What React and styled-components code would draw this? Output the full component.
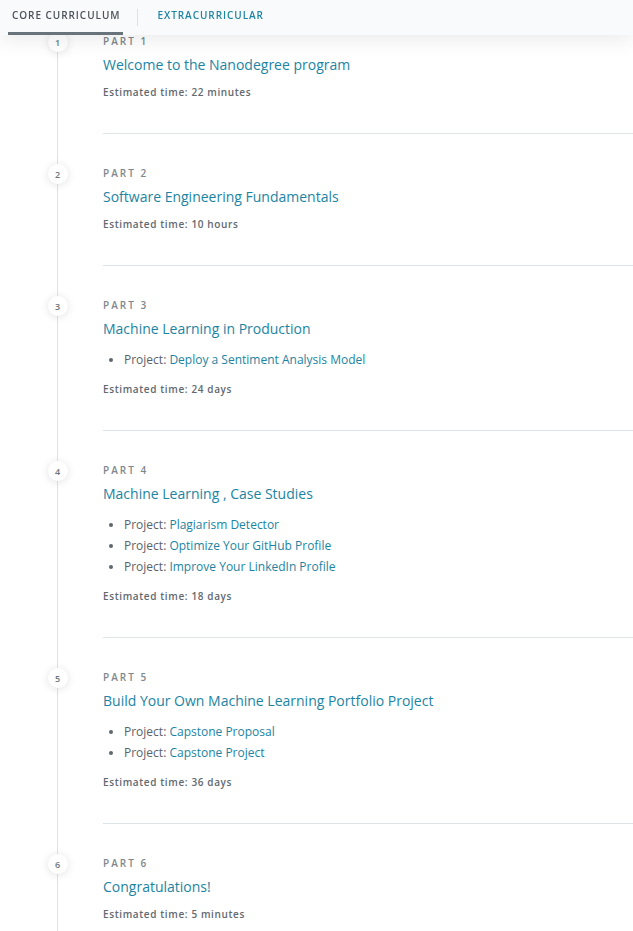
import styled, { createGlobalStyle } from 'styled-components';

const GlobalStyle = createGlobalStyle`
  html, body {
    margin: 0;
    padding: 0;
    background: #ffffff;
    font-family: "Open Sans", "Liberation Sans", sans-serif;
  }
`;

const TabBar = styled.nav`
  position: fixed;
  top: 0;
  left: 0;
  right: 0;
  height: 35px;
  display: flex;
  align-items: stretch;
  padding-left: 8px;
  background: #f9fafc;
  box-shadow: 0 4px 22px rgba(0, 0, 0, 0.09);
  z-index: 10;
`;

const Tab = styled.a`
  display: flex;
  align-items: center;
  padding: 0 3px 2px 4px;
  font-size: 10px;
  font-weight: 600;
  letter-spacing: 0.95px;
  text-transform: uppercase;
  color: ${(p) => (p.$active ? '#4b5259' : '#1e86a4')};
  border-bottom: 3px solid ${(p) => (p.$active ? '#69737c' : 'transparent')};
  cursor: pointer;
`;

const TabDivider = styled.span`
  align-self: center;
  width: 1px;
  height: 17px;
  margin: 0 15px 0 14px;
  background: #dde2e7;
`;

const Timeline = styled.ol`
  list-style: none;
  margin: 0 0 0 57px;
  padding: 2px 0 0;
  border-left: 1px solid #dde3e8;
`;

const Item = styled.li`
  display: flex;
  align-items: flex-start;
`;

const Marker = styled.span`
  flex: none;
  width: 20px;
  height: 20px;
  margin: 30px 0 0 -10.5px;
  border-radius: 50%;
  background: #ffffff;
  box-shadow: 0 1px 9px rgba(0, 0, 0, 0.12);
  display: flex;
  align-items: center;
  justify-content: center;
  font-size: 9px;
  font-weight: 600;
  color: #6d757c;
`;

const Body = styled.div`
  flex: 1;
  margin-left: 35.5px;
  padding: 31px 0 33px;
  border-bottom: ${(p) => (p.$last ? 'none' : '1px solid #dfe4e8')};
`;

const PartLabel = styled.div`
  font-size: 10px;
  line-height: 16px;
  font-weight: 600;
  letter-spacing: 2px;
  color: #80878d;
`;

const Title = styled.h3`
  margin: 6px 0 0;
  font-size: 14px;
  line-height: 20px;
  font-weight: 400;
  color: #1b84a3;
`;

const Projects = styled.ul`
  margin: 10px 0 0;
  padding-left: 21px;
  list-style: disc;
  font-size: 12px;
  line-height: 21px;
  color: #5a6168;

  li::marker {
    color: #5f666c;
  }
`;

const ProjectLink = styled.a`
  color: #1b84a3;
`;

const Estimate = styled.div`
  margin-top: ${(p) => (p.$afterList ? '11px' : '9px')};
  font-size: 10px;
  line-height: 16px;
  font-weight: 600;
  letter-spacing: 0.62px;
  color: #62696f;
`;

const parts = [
  { title: 'Welcome to the Nanodegree program', time: '22 minutes', projects: [] },
  { title: 'Software Engineering Fundamentals', time: '10 hours', projects: [] },
  {
    title: 'Machine Learning in Production',
    time: '24 days',
    projects: ['Deploy a Sentiment Analysis Model'],
  },
  {
    title: 'Machine Learning , Case Studies',
    time: '18 days',
    projects: ['Plagiarism Detector', 'Optimize Your GitHub Profile', 'Improve Your LinkedIn Profile'],
  },
  {
    title: 'Build Your Own Machine Learning Portfolio Project',
    time: '36 days',
    projects: ['Capstone Proposal', 'Capstone Project'],
  },
  { title: 'Congratulations!', time: '5 minutes', projects: [] },
];

export default function App() {
  return (
    <>
      <GlobalStyle />
      <TabBar>
        <Tab $active>Core Curriculum</Tab>
        <TabDivider />
        <Tab>Extracurricular</Tab>
      </TabBar>
      <Timeline>
        {parts.map((part, i) => (
          <Item key={part.title}>
            <Marker>{i + 1}</Marker>
            <Body $last={i === parts.length - 1}>
              <PartLabel>PART {i + 1}</PartLabel>
              <Title>{part.title}</Title>
              {part.projects.length > 0 && (
                <Projects>
                  {part.projects.map((p) => (
                    <li key={p}>
                      Project: <ProjectLink>{p}</ProjectLink>
                    </li>
                  ))}
                </Projects>
              )}
              <Estimate $afterList={part.projects.length > 0}>
                Estimated time: {part.time}
              </Estimate>
            </Body>
          </Item>
        ))}
      </Timeline>
    </>
  );
}
